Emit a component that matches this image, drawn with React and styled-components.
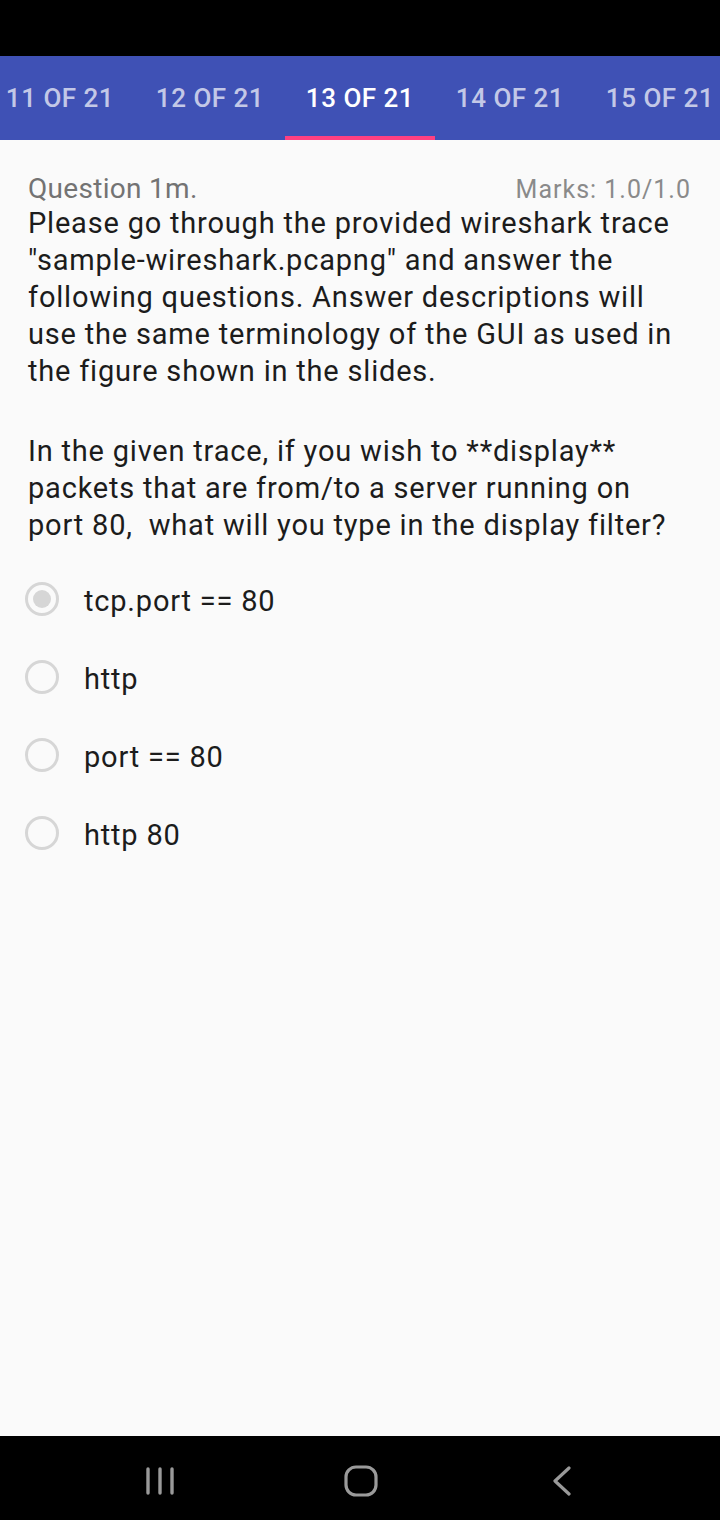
import React, { useState } from "react";
import styled, { createGlobalStyle } from "styled-components";

const GlobalStyle = createGlobalStyle`
  html, body {
    margin: 0;
    padding: 0;
    background: #000;
  }
  body {
    font-family: Roboto, "Liberation Sans", Arial, sans-serif;
  }
  * {
    box-sizing: border-box;
  }
`;

const tabs = ["11 OF 21", "12 OF 21", "13 OF 21", "14 OF 21", "15 OF 21"];
const options = ["tcp.port == 80", "http", "port == 80", "http 80"];

function App() {
  const [active, setActive] = useState(2);
  const [choice, setChoice] = useState(0);

  return (
    <Screen>
      <GlobalStyle />
      <StatusBar />
      <TabBar>
        <TabStrip>
          {tabs.map((t, i) => (
            <Tab key={t} $active={i === active} onClick={() => setActive(i)}>
              {t}
            </Tab>
          ))}
        </TabStrip>
      </TabBar>

      <Content>
        <QuestionHead>
          <QuestionNo>Question 1m.</QuestionNo>
          <Marks>Marks: 1.0/1.0</Marks>
        </QuestionHead>
        <Paragraph>
          Please go through the provided wireshark trace
          "sample-wireshark.pcapng" and answer the following questions. Answer
          descriptions will use the same terminology of the GUI as used in the
          figure shown in the slides.
        </Paragraph>
        <Paragraph $gap>
          In the given trace, if you wish to **display** packets that are
          from/to a server running on port 80,&nbsp; what will you type in the
          display filter?
        </Paragraph>

        <Options>
          {options.map((o, i) => (
            <Option key={o} onClick={() => setChoice(i)}>
              <Radio $checked={i === choice} />
              <OptionLabel>{o}</OptionLabel>
            </Option>
          ))}
        </Options>
      </Content>

      <NavBar>
        <NavButton>
          <svg width="28" height="28" viewBox="0 0 28 28">
            <g stroke="#9a9a9a" strokeWidth="3.4" strokeLinecap="round">
              <line x1="2" y1="2" x2="2" y2="26" />
              <line x1="14" y1="2" x2="14" y2="26" />
              <line x1="26" y1="2" x2="26" y2="26" />
            </g>
          </svg>
        </NavButton>
        <NavButton>
          <svg width="34" height="32" viewBox="0 0 34 32">
            <rect
              x="2"
              y="2"
              width="30"
              height="28"
              rx="10"
              fill="none"
              stroke="#9a9a9a"
              strokeWidth="3.2"
            />
          </svg>
        </NavButton>
        <NavButton>
          <svg width="20" height="30" viewBox="0 0 20 30">
            <polyline
              points="17,2 3,15 17,28"
              fill="none"
              stroke="#9a9a9a"
              strokeWidth="3.2"
              strokeLinecap="round"
              strokeLinejoin="round"
            />
          </svg>
        </NavButton>
      </NavBar>
    </Screen>
  );
}

const Screen = styled.div`
  width: 720px;
  height: 1520px;
  display: flex;
  flex-direction: column;
  background: #fafafa;
  overflow: hidden;
`;

const StatusBar = styled.div`
  height: 56px;
  flex: 0 0 56px;
  background: #000;
`;

const TabBar = styled.div`
  height: 84px;
  flex: 0 0 84px;
  background: #3f51b5;
  overflow: hidden;
`;

const TabStrip = styled.div`
  display: flex;
  height: 100%;
  margin-left: -15px;
`;

const Tab = styled.div`
  flex: 0 0 150px;
  display: flex;
  align-items: center;
  justify-content: center;
  font-size: 26px;
  font-weight: 500;
  letter-spacing: 0.5px;
  color: ${(p) => (p.$active ? "#ffffff" : "rgba(255, 255, 255, 0.7)")};
  border-top: 4px solid transparent;
  border-bottom: 4px solid ${(p) => (p.$active ? "#ff4081" : "transparent")};
  cursor: pointer;
  white-space: nowrap;
`;

const Content = styled.div`
  flex: 1;
  padding: 35px 29px 0 28px;
`;

const QuestionHead = styled.div`
  display: flex;
  justify-content: space-between;
  align-items: baseline;
  height: 30px;
  line-height: 28px;
`;

const QuestionNo = styled.span`
  font-size: 28px;
  letter-spacing: 0.3px;
  color: #737373;
`;

const Marks = styled.span`
  font-size: 25px;
  letter-spacing: 1px;
  color: #8a8a8a;
`;

const Paragraph = styled.p`
  margin: ${(p) => (p.$gap ? "43px 0 0" : "0")};
  font-size: 29px;
  letter-spacing: 0.8px;
  line-height: 37px;
  color: #1c1c1c;
`;

const Options = styled.div`
  margin: 18px 0 0 -3px;
  display: flex;
  flex-direction: column;
`;

const Option = styled.label`
  height: 78px;
  display: flex;
  align-items: center;
  gap: 25px;
  cursor: pointer;
`;

const Radio = styled.span`
  width: 34px;
  height: 34px;
  flex: 0 0 34px;
  margin-top: -4px;
  border-radius: 50%;
  border: 3px solid #d6d6d6;
  display: flex;
  align-items: center;
  justify-content: center;

  &::after {
    content: "";
    width: 18px;
    height: 18px;
    border-radius: 50%;
    background: ${(p) => (p.$checked ? "#d6d6d6" : "transparent")};
  }
`;

const OptionLabel = styled.span`
  font-size: 29px;
  letter-spacing: 0.8px;
  line-height: 37px;
  color: #1c1c1c;
`;

const NavBar = styled.div`
  height: 84px;
  flex: 0 0 84px;
  background: #000;
  display: grid;
  grid-template-columns: 1fr 1fr 1fr;
  padding: 5px 58px 0 60px;
  align-items: center;
`;

const NavButton = styled.div`
  display: flex;
  justify-content: center;
  align-items: center;
`;

export default App;
